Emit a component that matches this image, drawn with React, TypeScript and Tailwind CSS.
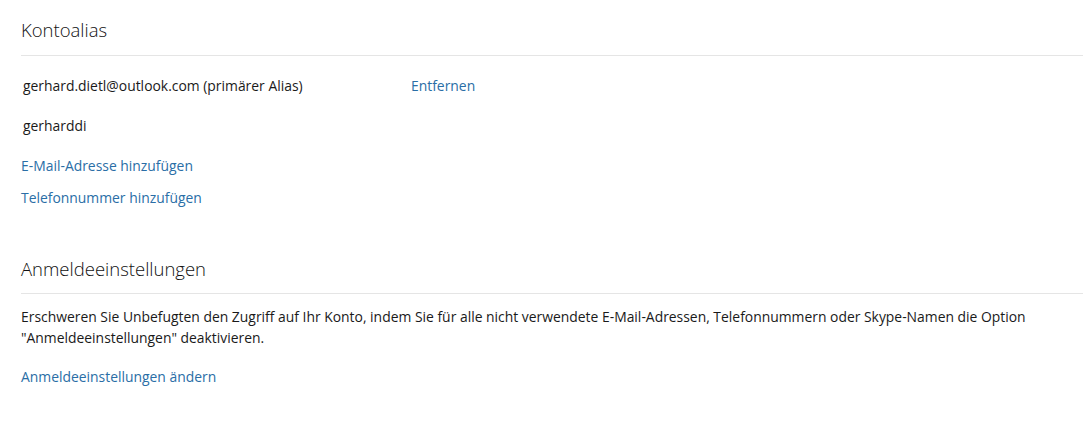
import React from "react";

const font = { fontFamily: '"Open Sans", "Liberation Sans", Arial, sans-serif' };

export default function App() {
  return (
    <div className="w-[1083px] h-[425px] bg-white text-[#1a1a1a] pl-[21px] pt-[16px]" style={font}>
      <section>
        <h2 className="text-[18.5px] leading-[28px] font-light text-[#111] pb-[11px] border-b border-[#e5e5e5]">Kontoalias</h2>
        <div className="mt-[20px] flex text-[13.9px] leading-[20px]">
          <span className="w-[390px] pl-[2px]">gerhard.dietl@outlook.com (primärer Alias)</span>
          <a className="text-[#2a6ea6]">Entfernen</a>
        </div>
        <div className="mt-[20px] text-[13.9px] leading-[20px] pl-[2px]">gerharddi</div>
        <div className="mt-[20px] text-[13.9px] leading-[20px] text-[#2a6ea6]">E-Mail-Adresse hinzufügen</div>
        <div className="mt-[12px] text-[13.9px] leading-[20px] text-[#2a6ea6]">Telefonnummer hinzufügen</div>
      </section>
      <section className="mt-[47px]">
        <h2 className="text-[18.5px] leading-[28px] font-light text-[#111] pb-[10px] border-b border-[#e5e5e5]">Anmeldeeinstellungen</h2>
        <p className="mt-[12px] text-[13.9px] leading-[21px] pr-[40px]">
          Erschweren Sie Unbefugten den Zugriff auf Ihr Konto, indem Sie für alle nicht verwendete E-Mail-Adressen, Telefonnummern oder Skype-Namen die Option "Anmeldeeinstellungen" deaktivieren.
        </p>
        <div className="mt-[19px] text-[13.9px] leading-[20px] text-[#2a6ea6]">Anmeldeeinstellungen ändern</div>
      </section>
    </div>
  );
}
